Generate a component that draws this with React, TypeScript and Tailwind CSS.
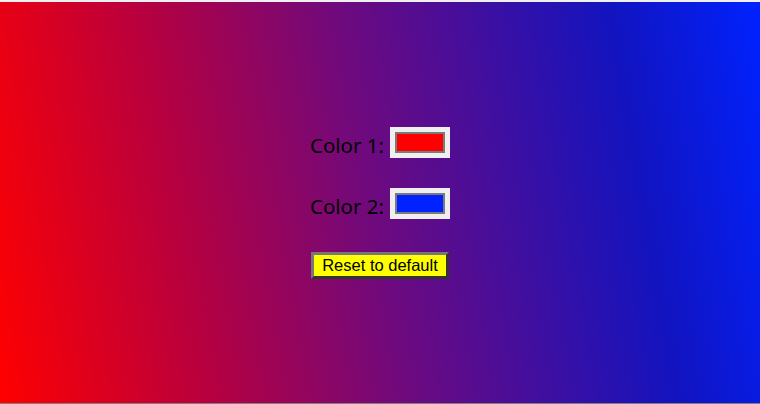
import React, { useState } from 'react';

const defaults = { color1: '#ff0000', color2: '#0022ff' };

const Swatch = ({ color }: { color: string }) => (
  <div className="w-[60px] h-[31px] bg-[#efefef] flex items-center justify-center">
    <div className="w-[50px] h-[21px] border-2 border-[#7a7a7a]" style={{ backgroundColor: color }} />
  </div>
);

const App = () => {
  const [colors, setColors] = useState(defaults);

  return (
    <div className="h-[404px] w-[760px] flex flex-col bg-[#f0f0f0]">
      <div className="h-[2px] shrink-0" />
      <div
        className="flex-1 flex flex-col items-center justify-center"
        style={{
          background: `linear-gradient(80deg, ${colors.color1}, #b8003e 25%, #6c0a80 50%, #1214c0 82%, ${colors.color2})`,
        }}
      >
        <div className="flex items-center gap-[6px] font-['Noto_Sans',sans-serif] text-[20.5px] text-black">
          <span className="translate-y-[3px]">Color 1:</span>
          <Swatch color={colors.color1} />
        </div>
        <div className="mt-[30px] flex items-center gap-[6px] font-['Noto_Sans',sans-serif] text-[20.5px] text-black">
          <span className="translate-y-[3px]">Color 2:</span>
          <Swatch color={colors.color2} />
        </div>
        <button
          onClick={() => setColors(defaults)}
          className="mt-[33px] h-[27px] px-[8px] bg-[#ffff00] border-[3px] border-t-[#777777] border-l-[#777777] border-b-[#333333] border-r-[#333333] font-['Liberation_Sans',sans-serif] text-[16.5px] leading-none text-black"
        >
          Reset to default
        </button>
      </div>
      <div className="h-px shrink-0 bg-[#808080]" />
    </div>
  );
};

export default App;
